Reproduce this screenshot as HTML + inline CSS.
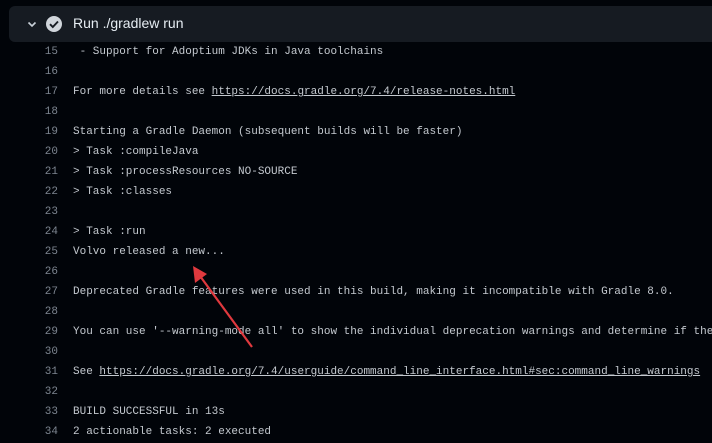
<!DOCTYPE html>
<html><head><style>
html,body{margin:0;padding:0;width:712px;height:443px;overflow:hidden;background:#010409;position:relative;}
.hdr{position:absolute;left:9px;top:6px;width:703px;height:36px;background:#161b22;border-radius:6px 0 0 6px;}
.hdr .t{position:absolute;left:64px;top:9px;font:14px "Liberation Sans",sans-serif;color:#e6edf3;}
.lines{position:absolute;left:0;top:42px;width:712px;height:401px;overflow:hidden;font:11px/20px "Liberation Mono",monospace;color:#c4c9cf;}
.l{height:20px;position:relative;}
.n{position:absolute;left:0;width:58px;text-align:right;color:#7d8590;}
.x{position:absolute;left:73px;white-space:pre;}
a{color:#c4c9cf;text-decoration:underline;}
</style></head><body>
<div class="hdr">
<svg style="position:absolute;left:17px;top:12px" width="12" height="12" viewBox="0 0 12 12"><path d="M2.5 4.5 L6 8 L9.5 4.5" stroke="#c9d1d9" stroke-width="1.6" fill="none"/></svg>
<svg style="position:absolute;left:36px;top:9px" width="18" height="18" viewBox="0 0 18 18"><circle cx="9" cy="9" r="8" fill="#d0d5db"/><path d="M5 9.2 L7.8 12 L13 6.5" stroke="#161b22" stroke-width="1.9" fill="none"/></svg>
<div class="t">Run ./gradlew run</div>
</div>
<div class="lines"><div class="l"><span class="n">15</span><span class="x"> - Support for Adoptium JDKs in Java toolchains</span></div><div class="l"><span class="n">16</span></div><div class="l"><span class="n">17</span><span class="x">For more details see <a>https://docs.gradle.org/7.4/release-notes.html</a></span></div><div class="l"><span class="n">18</span></div><div class="l"><span class="n">19</span><span class="x">Starting a Gradle Daemon (subsequent builds will be faster)</span></div><div class="l"><span class="n">20</span><span class="x">&gt; Task :compileJava</span></div><div class="l"><span class="n">21</span><span class="x">&gt; Task :processResources NO-SOURCE</span></div><div class="l"><span class="n">22</span><span class="x">&gt; Task :classes</span></div><div class="l"><span class="n">23</span></div><div class="l"><span class="n">24</span><span class="x">&gt; Task :run</span></div><div class="l"><span class="n">25</span><span class="x">Volvo released a new...</span></div><div class="l"><span class="n">26</span></div><div class="l"><span class="n">27</span><span class="x">Deprecated Gradle features were used in this build, making it incompatible with Gradle 8.0.</span></div><div class="l"><span class="n">28</span></div><div class="l"><span class="n">29</span><span class="x">You can use '--warning-mode all' to show the individual deprecation warnings and determine if the</span></div><div class="l"><span class="n">30</span></div><div class="l"><span class="n">31</span><span class="x">See <a>https://docs.gradle.org/7.4/userguide/command_line_interface.html#sec:command_line_warnings</a></span></div><div class="l"><span class="n">32</span></div><div class="l"><span class="n">33</span><span class="x">BUILD SUCCESSFUL in 13s</span></div><div class="l"><span class="n">34</span><span class="x">2 actionable tasks: 2 executed</span></div></div>
<svg style="position:absolute;left:0;top:0" width="712" height="443"><line x1="252" y1="347" x2="200" y2="276" stroke="#e0393e" stroke-width="2.2"/><polygon points="193,266 195,283 207,274" fill="#e0393e"/></svg>
</body></html>
